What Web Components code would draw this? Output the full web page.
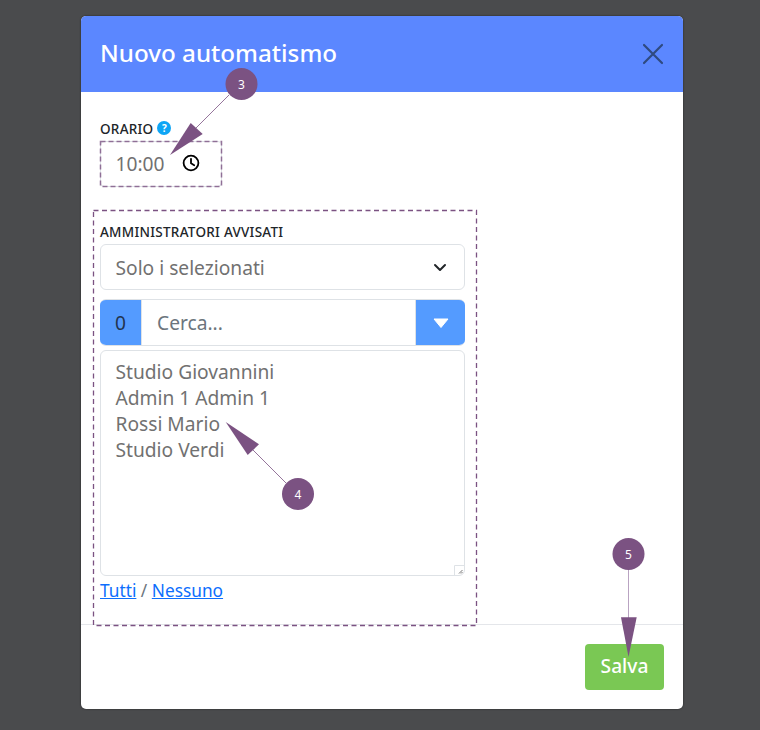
<!DOCTYPE html>
<html lang="it">
<head>
<meta charset="utf-8">
<title>Nuovo automatismo</title>
<style>
  html, body { margin: 0; height: 730px; overflow: hidden; }
  body {
    position: relative;
    background: #4a4b4d;
    font-family: "Noto Sans", "Open Sans", sans-serif;
    color: #212529;
  }
  app-modal { margin: 16px 0 0 81px; }
  form-label.first { margin-top: 28px; }
  form-label.second { margin-top: 36px; }
</style>
</head>
<body>
  <app-modal heading="Nuovo automatismo">
    <form-label class="first">ORARIO<help-dot></help-dot></form-label>
    <time-input value="10:00"></time-input>
    <form-label class="second">AMMINISTRATORI AVVISATI</form-label>
    <select-box value="Solo i selezionati"></select-box>
    <search-combo count="0" placeholder="Cerca..."></search-combo>
    <option-list>
      <div>Studio Giovannini</div>
      <div>Admin 1 Admin 1</div>
      <div>Rossi Mario</div>
      <div>Studio Verdi</div>
    </option-list>
    <all-none></all-none>
    <save-button slot="footer">Salva</save-button>
  </app-modal>
  <tour-overlay></tour-overlay>

<script>
// Small helper so each element only has to declare its styles and markup
class ShadowElement extends HTMLElement {
  constructor() {
    super();
    this.attachShadow({ mode: 'open' });
  }

  connectedCallback() {
    this.shadowRoot.innerHTML = `<style>${this.styles()}</style>${this.markup()}`;
  }
}

class AppModal extends ShadowElement {
  styles() {
    return `
      :host { display: block; width: 602px; height: 693px; }
      .dialog {
        display: flex; flex-direction: column; height: 100%;
        background: #fff; border-radius: 5px; overflow: hidden;
        box-shadow: 0 0 2px rgba(0, 0, 0, .6);
      }
      header {
        flex: none; height: 76px; box-sizing: border-box;
        display: flex; align-items: center; justify-content: space-between;
        padding: 0 19px; background: #5b87ff;
      }
      h1 { margin: -2px 0 0; font-size: 24.2px; line-height: 30px; font-weight: 500; color: #fff; }
      svg { display: block; }
      main { flex: 1; padding: 0 218px 0 19px; min-height: 0; }
      footer {
        flex: none; height: 85px; box-sizing: border-box;
        display: flex; justify-content: flex-end; align-items: flex-start;
        padding: 19px 19px 0; border-top: 1px solid #e4e6ea;
      }
    `;
  }

  markup() {
    return `
      <div class="dialog">
        <header>
          <h1>${this.getAttribute('heading')}</h1>
          <svg width="22" height="22" viewBox="0 0 22 22" fill="none" stroke="#2f4a80" stroke-width="2.2" stroke-linecap="round">
            <path d="M2 2 L20 20 M20 2 L2 20"/>
          </svg>
        </header>
        <main><slot></slot></main>
        <footer><slot name="footer"></slot></footer>
      </div>
    `;
  }
}

class FormLabel extends ShadowElement {
  styles() {
    return `
      :host {
        display: flex; align-items: center; gap: 4px; height: 17px;
        font-size: 13.5px; font-weight: 500; letter-spacing: .27px; color: #212529;
      }
    `;
  }

  markup() {
    return '<slot></slot>';
  }
}

class HelpDot extends ShadowElement {
  styles() {
    return `
      :host {
        display: block; width: 14px; height: 14px; margin-top: -2px; border-radius: 50%;
        background: #0ea5f5; color: #fff; text-align: center;
        font-size: 10px; line-height: 14px; font-weight: 700; letter-spacing: 0;
      }
    `;
  }

  markup() {
    return '?';
  }
}

class TimeInput extends ShadowElement {
  styles() {
    return `
      :host {
        display: flex; align-items: center; box-sizing: border-box;
        width: 122px; height: 46px; margin-top: 4px; padding: 0 0 2px 14.5px;
        border: 1px solid #dee2e6; border-radius: 4px;
        font-size: 19.2px; color: #717171;
      }
      svg { margin-left: 17.5px; }
    `;
  }

  markup() {
    return `
      <span>${this.getAttribute('value')}</span>
      <svg width="18" height="18" viewBox="0 0 18 18" fill="none" stroke="#000" stroke-width="1.8" stroke-linecap="round" stroke-linejoin="round">
        <circle cx="9" cy="9" r="7.4"/>
        <path d="M9 4.8 V9.2 L12.2 11.2"/>
      </svg>
    `;
  }
}

class SelectBox extends ShadowElement {
  styles() {
    return `
      :host {
        display: flex; align-items: center; justify-content: space-between; box-sizing: border-box;
        width: 365px; height: 46px; margin-top: 4px; padding: 0 17px 0 14.5px;
        border: 1.5px solid #dee2e6; border-radius: 6px;
        font-size: 19.2px; color: #717171;
      }
    `;
  }

  markup() {
    return `
      <span>${this.getAttribute('value')}</span>
      <svg width="14" height="9" viewBox="0 0 14 9" fill="none" stroke="#212529" stroke-width="2" stroke-linecap="round" stroke-linejoin="round">
        <path d="M2 2 L7 7 L12 2"/>
      </svg>
    `;
  }
}

class SearchCombo extends ShadowElement {
  styles() {
    return `
      :host {
        display: flex; box-sizing: border-box;
        width: 365px; height: 47px; margin-top: 9px;
        border-radius: 6px; overflow: hidden;
        border-top: 1.5px solid #dee2e6; border-bottom: 1.5px solid #dee2e6;
        font-size: 19.2px;
      }
      .count {
        width: 41px; margin: -1.5px 0; display: flex; align-items: center; justify-content: center;
        background: #549bff; color: #22344f;
      }
      .text {
        flex: 1; display: flex; align-items: center; padding-left: 15px; color: #6c757d;
        border-left: 1px solid #dee2e6; border-right: 1px solid #dee2e6;
      }
      .toggle {
        width: 49px; margin: -1.5px 0; display: flex; align-items: center; justify-content: center;
        background: #549bff;
      }
    `;
  }

  markup() {
    return `
      <div class="count">${this.getAttribute('count')}</div>
      <div class="text">${this.getAttribute('placeholder')}</div>
      <div class="toggle">
        <svg width="16" height="10" viewBox="0 0 16 10"><path d="M1 1 H15 L8 9.5 Z" fill="#fff" stroke="#fff" stroke-linejoin="round"/></svg>
      </div>
    `;
  }
}

class OptionList extends ShadowElement {
  styles() {
    return `
      :host {
        display: block; position: relative; box-sizing: border-box;
        width: 365px; height: 226px; margin-top: 4px; padding: 8px 14.5px;
        border: 1.5px solid #dee2e6; border-radius: 6px;
        font-size: 19.2px; line-height: 26px; color: #717171;
      }
      svg { position: absolute; right: 0; bottom: 0; }
    `;
  }

  markup() {
    return `
      <slot></slot>
      <svg width="10" height="10" viewBox="0 0 10 10" fill="none">
        <path d="M.5 10 V.5 H10" stroke="#dee2e6"/>
        <path d="M5 8.5 L8.5 5 M7 8.5 L8.5 7" stroke="#777"/>
      </svg>
    `;
  }
}

class AllNone extends ShadowElement {
  styles() {
    return `
      :host { display: block; margin-top: 3px; font-size: 17.3px; line-height: 24px; color: #6c757d; }
      a { color: #0d6efd; text-decoration: underline; }
    `;
  }

  markup() {
    return '<a href="#">Tutti</a> / <a href="#">Nessuno</a>';
  }
}

class SaveButton extends ShadowElement {
  styles() {
    return `
      :host {
        display: flex; align-items: center; justify-content: center; box-sizing: border-box;
        width: 79px; height: 46px; padding-bottom: 3px; border-radius: 4px;
        background: #7ac854; color: #fff; font-size: 19.2px; font-weight: 500;
      }
    `;
  }

  markup() {
    return '<slot></slot>';
  }
}

// Guided tour marks drawn on top of the dialog
class TourOverlay extends ShadowElement {
  styles() {
    return `
      :host { position: absolute; left: 0; top: 0; width: 760px; height: 730px; pointer-events: none; }
      svg { display: block; }
      text { font-family: "Noto Sans", sans-serif; font-size: 12px; fill: #fff; text-anchor: middle; }
    `;
  }

  markup() {
    const purple = '#7b5282';
    return `
      <svg width="760" height="730" viewBox="0 0 760 730" fill="none">
        <rect x="100.5" y="141.5" width="121" height="45" stroke="${purple}" stroke-opacity=".8" stroke-width="1.5" stroke-dasharray="5 3"/>
        <rect x="93.5" y="210.5" width="383" height="415" stroke="${purple}" stroke-width="1.3" stroke-dasharray="5 3.5"/>

        <path d="M229 95 L195 129" stroke="${purple}" stroke-opacity=".8"/>
        <path d="M170 155 L190.7 123 L202.7 134 Z" fill="${purple}"/>
        <circle cx="241.5" cy="84" r="16" fill="${purple}"/>
        <text x="241.5" y="88.5">3</text>

        <path d="M286 483 L253 450" stroke="${purple}" stroke-opacity=".8"/>
        <path d="M225.7 422 L259 444.3 L247.7 455 Z" fill="${purple}"/>
        <circle cx="298" cy="494" r="16" fill="${purple}"/>
        <text x="298" y="498.5">4</text>

        <path d="M628.5 570 V618" stroke="#b9a3c2"/>
        <path d="M628.5 657 L621 617.3 H636.7 Z" fill="${purple}"/>
        <circle cx="628.5" cy="554" r="16" fill="${purple}"/>
        <text x="628.5" y="558.5">5</text>
      </svg>
    `;
  }
}

customElements.define('app-modal', AppModal);
customElements.define('form-label', FormLabel);
customElements.define('help-dot', HelpDot);
customElements.define('time-input', TimeInput);
customElements.define('select-box', SelectBox);
customElements.define('search-combo', SearchCombo);
customElements.define('option-list', OptionList);
customElements.define('all-none', AllNone);
customElements.define('save-button', SaveButton);
customElements.define('tour-overlay', TourOverlay);
</script>
</body>
</html>
